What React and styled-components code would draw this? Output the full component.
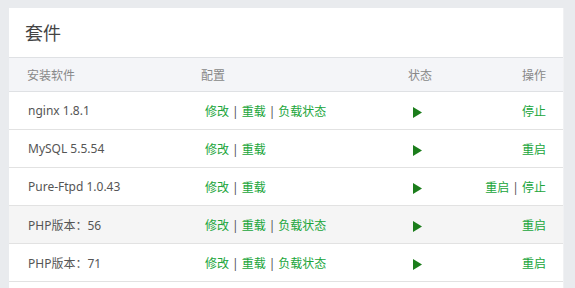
import React from "react";
import styled, { createGlobalStyle } from "styled-components";

const rows = [
  { name: "nginx 1.8.1", config: ["修改", "重载", "负载状态"], ops: ["停止"] },
  { name: "MySQL 5.5.54", config: ["修改", "重载"], ops: ["重启"] },
  { name: "Pure-Ftpd 1.0.43", config: ["修改", "重载"], ops: ["重启", "停止"] },
  { name: "PHP版本：56", config: ["修改", "重载", "负载状态"], ops: ["重启"], hover: true },
  { name: "PHP版本：71", config: ["修改", "重载", "负载状态"], ops: ["重启"] },
  { name: "", config: [], ops: [] },
];

const LinkGroup = ({ items }) => (
  <>
    {items.map((item, i) => (
      <React.Fragment key={item}>
        {i > 0 && <Sep>|</Sep>}
        <Link>{item}</Link>
      </React.Fragment>
    ))}
  </>
);

const PlayIcon = () => (
  <svg width="9" height="11" viewBox="0 0 9 11">
    <path d="M0 0 L9 5.5 L0 11 Z" fill="#1b7d1b" />
  </svg>
);

const App = () => (
  <>
    <GlobalStyle />
    <Page>
      <Panel>
        <Title>套件</Title>
        <Table>
          <thead>
            <tr>
              <Th>安装软件</Th>
              <Th>配置</Th>
              <Th>状态</Th>
              <Th $right>操作</Th>
            </tr>
          </thead>
          <tbody>
            {rows.map((row, i) => (
              <Row key={i} $hover={row.hover}>
                <NameCell>{row.name}</NameCell>
                <ConfigCell>
                  <LinkGroup items={row.config} />
                </ConfigCell>
                <StatusCell>{row.name && <PlayIcon />}</StatusCell>
                <OpsCell>
                  <LinkGroup items={row.ops} />
                </OpsCell>
              </Row>
            ))}
          </tbody>
        </Table>
      </Panel>
    </Page>
  </>
);

const GlobalStyle = createGlobalStyle`
  html, body {
    margin: 0;
    padding: 0;
    background: #e9ebee;
    overflow: hidden;
  }
  body {
    font-family: "Noto Sans", "Noto Sans CJK SC", sans-serif;
  }
`;

const Page = styled.div`
  padding: 8px 11px 0 9px;
  height: 288px;
  box-sizing: border-box;
`;

const Panel = styled.div`
  background: #fff;
  height: 100%;
  border-right: 1px solid #f0f1f3;
`;

const Title = styled.div`
  height: 49px;
  line-height: 50px;
  padding-left: 16px;
  font-size: 18px;
  color: #444;
  border-bottom: 1px solid #dfe1e4;
`;

const Table = styled.table`
  width: 100%;
  border-collapse: collapse;
  font-size: 12px;
  table-layout: fixed;
`;

const Th = styled.th`
  height: 33px;
  padding: 0;
  background: #f4f5f8;
  color: #888;
  font-weight: normal;
  text-align: ${(p) => (p.$right ? "right" : "left")};
  border-bottom: 1px solid #dfe1e4;

  &:nth-child(1) { width: 174px; padding-left: 18px; }
  &:nth-child(2) { width: 207px; }
  &:nth-child(3) { width: 60px; }
  &:nth-child(4) { padding-right: 17px; }
`;

const Row = styled.tr`
  background: ${(p) => (p.$hover ? "#f5f5f5" : "#fff")};

  td {
    height: 37px;
    padding: 0;
    border-bottom: 1px solid #e2e2e2;
    white-space: nowrap;
  }
`;

const NameCell = styled.td`
  padding-left: 19px !important;
  color: #555;
`;

const ConfigCell = styled.td`
  padding-left: 4px !important;
`;

const StatusCell = styled.td`
  padding-left: 5px !important;

  svg {
    display: block;
    margin-top: 4px;
  }
`;

const OpsCell = styled.td`
  text-align: right;
  padding-right: 17px !important;
`;

const Link = styled.span`
  color: #20a53a;
`;

const Sep = styled.span`
  color: #555;
  margin: 0 3px;
`;

export default App;
